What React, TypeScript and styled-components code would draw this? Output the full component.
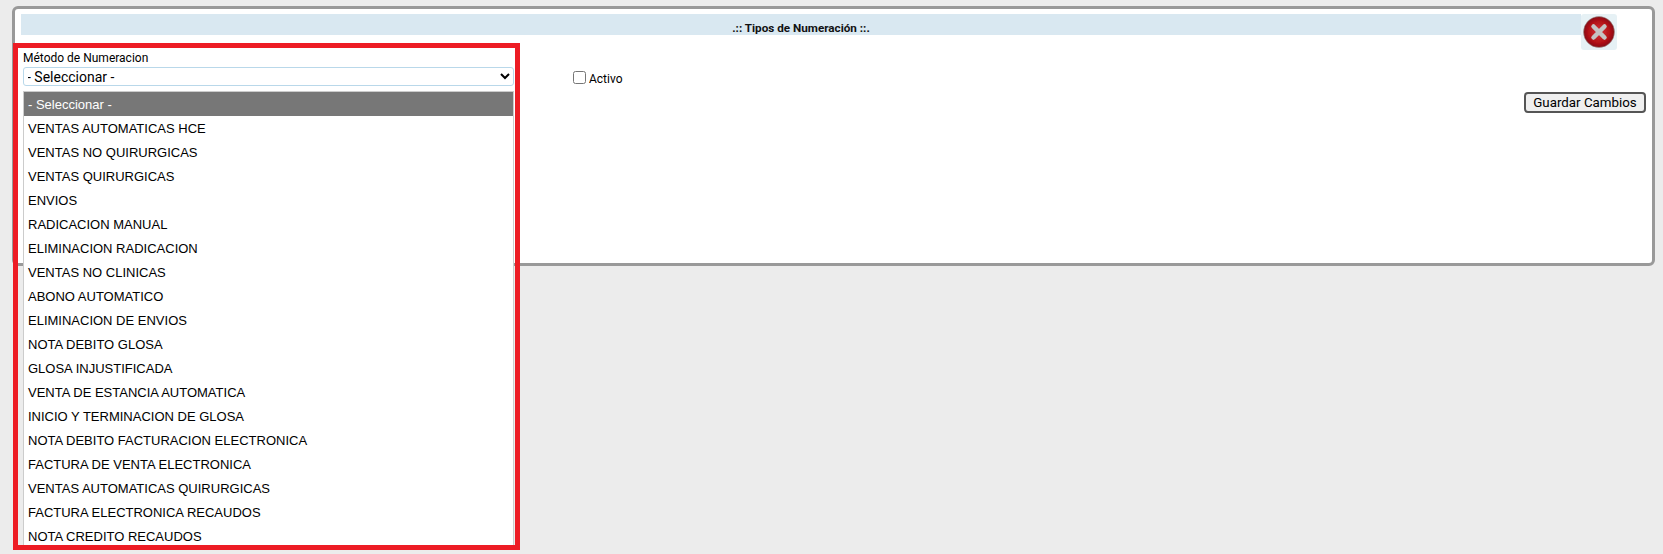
import React from "react";
import styled, { createGlobalStyle } from "styled-components";

const Global = createGlobalStyle`
  html, body { margin: 0; padding: 0; height: 554px; overflow: hidden; background: #ececec; }
  body { font-family: Roboto, "Liberation Sans", Arial, sans-serif; font-size: 12px; color: #000; }
`;

const Page = styled.div`
  padding: 6px 8px 0 12px;
`;

const Panel = styled.section`
  box-sizing: border-box;
  height: 260px;
  background: #fff;
  border: 3px solid #999;
  border-radius: 6px;
  padding: 5px 35px 0 6px;
`;

const HeaderRow = styled.div`
  display: flex;
  align-items: flex-start;
  height: 21px;
`;

const Title = styled.h1`
  flex: 1;
  margin: 0;
  height: 21px;
  background: #d9e8f1;
  text-align: center;
  font: bold 11.7px/28px Roboto, "Liberation Sans", Arial, sans-serif;
  color: #111;
`;

const CloseTile = styled.button`
  flex: none;
  width: 36px;
  height: 36px;
  padding: 0;
  border: 0;
  border-radius: 3px;
  background: #e6f1f5;
  display: flex;
  align-items: center;
  justify-content: center;
`;

const FormRow = styled.div`
  display: flex;
  align-items: flex-start;
  margin-left: 2px;
  margin-top: 15px;
`;

const Field = styled.div`
  position: relative;
  width: 491px;
  flex: none;
`;

const Label = styled.label`
  display: block;
  height: 17px;
  line-height: 16px;
  font-size: 12px;
`;

const Select = styled.select`
  display: block;
  box-sizing: border-box;
  width: 100%;
  height: 19px;
  border: 1px solid #b9d8ea;
  border-radius: 3px;
  background: #fff;
  font: 14px Roboto, Arial, sans-serif;
  padding: 0;
  text-indent: -1px;
  color: #000;
`;

const Menu = styled.ul`
  position: absolute;
  top: 41px;
  left: 0;
  right: 0;
  height: 454px;
  overflow: hidden;
  margin: 0;
  padding: 0;
  list-style: none;
  background: #fff;
  border: 1px solid #ccc;
  border-bottom: 0;
  box-sizing: border-box;
`;

const Option = styled.li<{ $active?: boolean }>`
  height: 24px;
  padding-left: 4px;
  font: 13px/25px "Liberation Sans", Arial, sans-serif;
  white-space: nowrap;
  background: ${(p) => (p.$active ? "#777" : "transparent")};
  color: ${(p) => (p.$active ? "#fff" : "#000")};
`;

const Highlight = styled.div`
  position: absolute;
  top: -7px;
  left: -10px;
  width: 507px;
  height: 507px;
  box-sizing: border-box;
  border: 5px solid #ed1c24;
  pointer-events: none;
`;

const ActiveCheck = styled.label`
  display: flex;
  align-items: center;
  gap: 3px;
  margin: 21px 0 0 59px;
  height: 16px;
  font-size: 12px;
`;

const Box = styled.input`
  width: 13px;
  height: 13px;
  margin: 0;
  position: relative;
  top: -2px;
`;

const Actions = styled.div`
  display: flex;
  justify-content: flex-end;
  margin-top: 5px;
  margin-right: -29px;
`;

const SaveButton = styled.button`
  box-sizing: border-box;
  width: 122px;
  height: 21px;
  padding: 0;
  border: 2px solid #555;
  border-radius: 4px;
  background: #efefef;
  font: 13.33px Roboto, "Liberation Sans", Arial, sans-serif;
  color: #000;
`;

const options = [
  "- Seleccionar -",
  "VENTAS AUTOMATICAS HCE",
  "VENTAS NO QUIRURGICAS",
  "VENTAS QUIRURGICAS",
  "ENVIOS",
  "RADICACION MANUAL",
  "ELIMINACION RADICACION",
  "VENTAS NO CLINICAS",
  "ABONO AUTOMATICO",
  "ELIMINACION DE ENVIOS",
  "NOTA DEBITO GLOSA",
  "GLOSA INJUSTIFICADA",
  "VENTA DE ESTANCIA AUTOMATICA",
  "INICIO Y TERMINACION DE GLOSA",
  "NOTA DEBITO FACTURACION ELECTRONICA",
  "FACTURA DE VENTA ELECTRONICA",
  "VENTAS AUTOMATICAS QUIRURGICAS",
  "FACTURA ELECTRONICA RECAUDOS",
  "NOTA CREDITO RECAUDOS",
];

const CloseIcon = () => (
  <svg width="36" height="36" viewBox="0 0 36 36" aria-hidden="true">
    <defs>
      <radialGradient id="ball" cx="50%" cy="50%" r="52%">
        <stop offset="0%" stopColor="#d8383c" />
        <stop offset="70%" stopColor="#b01015" />
        <stop offset="100%" stopColor="#7f0d11" />
      </radialGradient>
      <filter id="soft">
        <feGaussianBlur stdDeviation="0.7" />
      </filter>
    </defs>
    <g filter="url(#soft)">
      <circle cx="18" cy="18" r="15.5" fill="url(#ball)" stroke="#9a9a9a" strokeOpacity="0.5" />
      <path d="M12.5 12.5 L23.5 23.5 M23.5 12.5 L12.5 23.5" stroke="#c4c4c4" strokeWidth="4.5" strokeLinecap="round" />
    </g>
  </svg>
);

export default function App() {
  return (
    <Page>
      <Global />
      <Panel>
        <HeaderRow>
          <Title>.:: Tipos de Numeración ::.</Title>
          <CloseTile aria-label="Cerrar">
            <CloseIcon />
          </CloseTile>
        </HeaderRow>
        <FormRow>
          <Field>
            <Label>Método de Numeracion</Label>
            <Select defaultValue="">
              <option value="">- Seleccionar -</option>
            </Select>
            <Menu>
              {options.map((o, i) => (
                <Option key={o} $active={i === 0}>{o}</Option>
              ))}
            </Menu>
            <Highlight />
          </Field>
          <ActiveCheck>
            <Box type="checkbox" />
            Activo
          </ActiveCheck>
        </FormRow>
        <Actions>
          <SaveButton>Guardar Cambios</SaveButton>
        </Actions>
      </Panel>
    </Page>
  );
}
